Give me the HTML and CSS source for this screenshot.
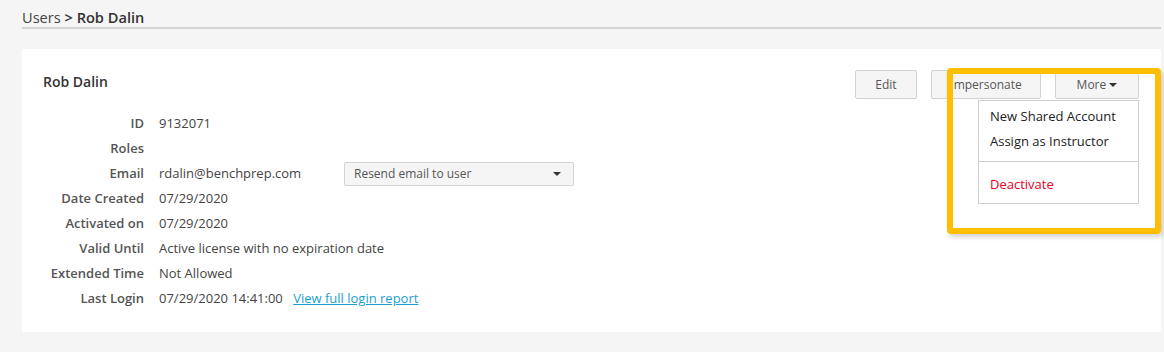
FILE: index.html
```html
<!DOCTYPE html>
<html lang="en">
<head>
  <meta charset="UTF-8">
  <title>Users – Rob Dalin</title>
  <link rel="stylesheet" href="styles.css">
</head>
<body>
  <div class="crumbs">Users <b>&gt; Rob Dalin</b></div>

  <div class="card">
    <div class="card-head">
      <h3>Rob Dalin</h3>
      <div class="actions">
        <button class="btn btn-edit">Edit</button>
        <button class="btn btn-imp">Impersonate</button>
        <div class="more">
          <button class="btn btn-more">More <span class="caret"></span></button>
          <ul class="menu">
            <li>New Shared Account</li>
            <li>Assign as Instructor</li>
            <li class="sep"></li>
            <li class="danger">Deactivate</li>
          </ul>
        </div>
      </div>
      <div class="highlight"></div>
    </div>

    <dl class="info">
      <dt>ID</dt><dd>9132071</dd>
      <dt>Roles</dt><dd></dd>
      <dt>Email</dt>
      <dd class="email">
        <span class="email-addr">rdalin@benchprep.com</span>
        <span class="select">Resend email to user <span class="caret"></span></span>
      </dd>
      <dt>Date Created</dt><dd>07/29/2020</dd>
      <dt>Activated on</dt><dd>07/29/2020</dd>
      <dt>Valid Until</dt><dd>Active license with no expiration date</dd>
      <dt>Extended Time</dt><dd>Not Allowed</dd>
      <dt>Last Login</dt><dd>07/29/2020 14:41:00 <a href="#">View full login report</a></dd>
    </dl>
  </div>
</body>
</html>
```

FILE: styles.css
```css
/* ---------- Page ---------- */
*{box-sizing:border-box;margin:0;padding:0;}

body{
  font-family:'Open Sans',sans-serif;
  font-size:13px;
  background:#f5f5f5;
  color:#444;
  padding:8px 3px 0 22px;
}

.crumbs{
  font-size:14.6px;
  color:#444;
  line-height:19px;
  border-bottom:2px solid #d4d4d4;
  height:21px;
}
.crumbs b{font-weight:600;color:#333;}

/* ---------- Card ---------- */
.card{
  position:relative;
  margin-top:20px;
  background:#fff;
  border-radius:0 3px 0 0;
  box-shadow:0 2px 1px -1px #cfcfcf;
  padding:20px 21px 22px;
  height:283px;
}

.card-head{
  display:flex;
  justify-content:space-between;
  align-items:flex-start;
}

h3{
  font-size:14px;
  font-weight:600;
  color:#333;
  margin-top:3px;
}

.actions{
  display:flex;
  gap:14px;
  margin-right:1px;
  margin-top:1px;
}

.btn{
  font-family:'Open Sans',sans-serif;
  font-size:12px;
  color:#555;
  background:#f5f5f5;
  border:1px solid #d2d2d2;
  border-radius:2px;
  height:29px;
  cursor:pointer;
}
.btn-edit{width:62px;}
.btn-imp{width:110px;}
.btn-more{width:84px;}

.caret{
  display:inline-block;
  width:0;height:0;
  border-left:4px solid transparent;
  border-right:4px solid transparent;
  border-top:4px solid #333;
  vertical-align:2px;
}

.more{position:relative;}

.menu{
  position:absolute;
  top:30px;
  right:0;
  width:161px;
  list-style:none;
  background:#fff;
  border:1px solid #cfcfcf;
  padding:3px 0 6px;
  z-index:2;
}
.menu li{
  font-size:13px;
  color:#222;
  padding:0 11px;
  line-height:25px;
}
.menu .sep{
  height:1px;
  background:#cfcfcf;
  margin:7px 0 10px;
  padding:0;
}
.menu .danger{color:#e8001c;}

.highlight{
  position:absolute;
  left:925px;
  top:19px;
  width:214px;
  height:166px;
  border:6px solid #ffbf00;
  border-radius:4px;
  box-shadow:2px 3px 5px rgba(0,0,0,.18);
  z-index:3;
  pointer-events:none;
}

/* ---------- Details ---------- */
.info{
  display:grid;
  grid-template-columns:101px 1fr;
  column-gap:15px;
  margin-top:12px;
}
.info dt{
  font-weight:600;
  text-align:right;
  color:#555;
  line-height:25px;
  height:25px;
}
.info dd{
  line-height:25px;
  height:25px;
  color:#444;
}
.info a{color:#1a9fd3;margin-left:7px;}

.email{display:flex;align-items:center;}
.email-addr{width:185px;}

.select{
  display:flex;
  justify-content:space-between;
  align-items:center;
  width:230px;
  height:24px;
  padding:0 12px 0 9px;
  background:#f5f5f5;
  border:1px solid #d4d4d4;
  border-radius:2px;
  color:#555;
  font-size:12px;
}
```
